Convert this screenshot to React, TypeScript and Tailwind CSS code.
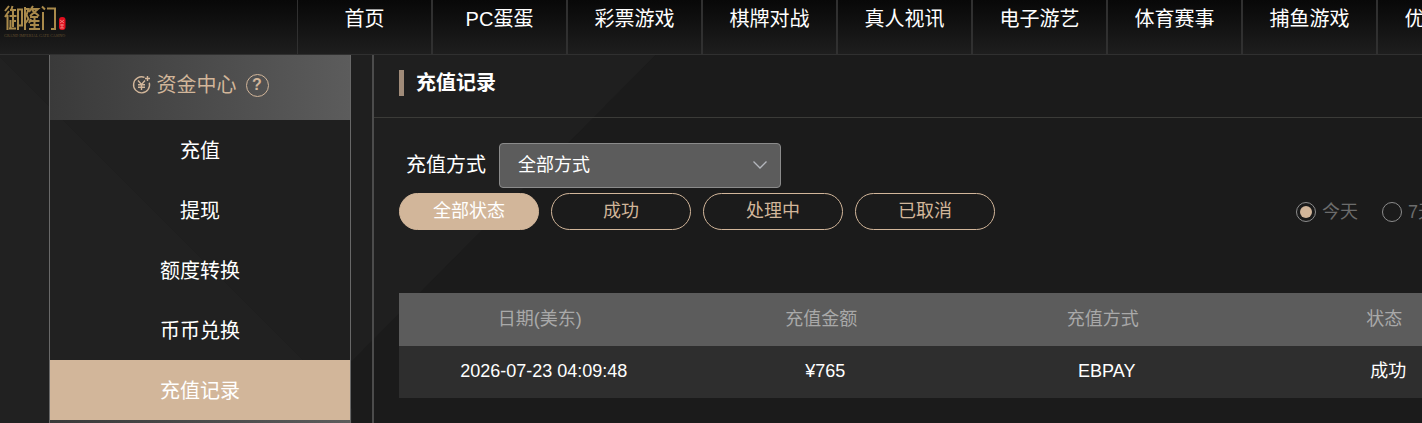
import React from "react";

const navItems = ["首页", "PC蛋蛋", "彩票游戏", "棋牌对战", "真人视讯", "电子游艺", "体育赛事", "捕鱼游戏", "优惠活动"];
const menuItems = ["充值", "提现", "额度转换", "币币兑换", "充值记录"];
const statuses = ["全部状态", "成功", "处理中", "已取消"];
const ranges = ["今天", "7天"];
const columns = ["日期(美东)", "充值金额", "充值方式", "状态"];
const records = [["2026-07-23 04:09:48", "¥765", "EBPAY", "成功"]];

function Logo() {
  return (
    <a href="#" aria-label="御隆门" className="block w-[298px] shrink-0 pt-1 pl-1">
      <svg width="64" height="36" viewBox="0 0 64 36">
        <g fill="none" stroke="#a98a4b" strokeWidth="2">
          <path d="M5 2 1 7M5 7 1 13M3.5 11v15M8.500 2 7 7M6 6h6M9 5v18M5.500 12h7M9 17h3M6.500 16v8M5 24.500h7M13.500 5.500H18v16h-3M14 4.500V26" />
          <path d="M21 3v23M20 5h4.500l-2 6 2 4-3 4M29 2l-4 6M27 5h7l-8 7M28 6l7 6M26 13h8M27 15l-2 4M25.500 17h10M30.500 13v12M26 21h9M25 25h11" />
          <path d="M39 8v18M38 2.500l3 3M43 4.500h8V25h-4" />
        </g>
        <rect x="55" y="13" width="6.500" height="13" rx="3" fill="#e00f1e" />
        <path d="M56 16l4 3M60 16l-4 3M56 21h4M58 20v4M56 24h4" stroke="#f5a39c" strokeWidth="0.7" fill="none" />
        <text x="0" y="33" fill="#65502f" fontSize="4" fontFamily="Liberation Serif, serif">GRAND IMPERIAL GATE CASINO</text>
      </svg>
    </a>
  );
}

function CoinIcon() {
  return (
    <svg width="20" height="20" viewBox="0 0 20 20" fill="none" stroke="#d2b69a" strokeWidth="1.4">
      <path d="M12.500 2.400A8 8 0 1 0 17.300 7.800M15.500 1v5M13 3.500h5M6 5.500 9.500 9.500 13 5.500M6 9.700h7M6 12.200h7M9.500 9.500V15" />
    </svg>
  );
}

export default function App() {
  return (
    <div
      className="relative isolate flex min-h-screen flex-col overflow-hidden bg-[#1b1b1b] text-xl text-white"
      style={{ fontFamily: '"Liberation Sans", "Noto Sans CJK SC", sans-serif' }}
    >
      <svg className="absolute top-0 left-0 -z-10" width="712" height="423" aria-hidden="true">
        <path d="M0 0H710L352 361 318 375 0 57Z" fill="#1f1f1f" />
        <path d="M0 57 318 375 352 409V423H0Z" fill="#212121" />
      </svg>

      <header className="flex h-[55px] shrink-0 border-b border-[#303030] bg-linear-to-b from-[#080808] to-[#1e1e1e]">
        <Logo />
        <nav className="-ml-px flex">
          {navItems.map((item) => (
            <a key={item} href="#" className="w-[135px] shrink-0 border-x border-[#303030] pt-[5px] text-center leading-7">
              {item}
            </a>
          ))}
        </nav>
      </header>

      <div className="flex grow pl-[49px]">
        <aside className="w-[302px] shrink-0 border-x border-[#686868]">
          <h2 className="flex h-[65px] items-center justify-center gap-[5px] bg-linear-to-r from-[#3a3a3a] to-[#5c5c5c] pb-[5px] text-[#d2b69a]">
            <CoinIcon />
            <span>资金中心</span>
            <button
              aria-label="帮助"
              className="ml-1 flex size-[23px] items-center justify-center rounded-full border border-[#d2b69a] text-base leading-none font-bold"
            >
              ?
            </button>
          </h2>
          <nav className="flex flex-col">
            {menuItems.map((item) => (
              <a
                key={item}
                href="#"
                className={
                  item === "充值记录"
                    ? "h-[60px] bg-[#d2b69a] pt-px text-center leading-[60px]"
                    : "h-[60px] pt-px text-center leading-[60px]"
                }
              >
                {item}
              </a>
            ))}
          </nav>
          <div className="-mb-[62px] h-[65px] bg-linear-to-r from-[#3a3a3a] to-[#5c5c5c]" />
        </aside>

        <main className="ml-[21px] min-w-0 grow border-l-2 border-[#4c4c4c]">
          <div className="flex h-[63px] items-center border-b border-[#3b3b38] pb-1.5 pl-[25px]">
            <span className="mr-3 h-[26px] w-[5px] bg-[#a08b79]" />
            <h1 className="font-bold">充值记录</h1>
          </div>

          <div className="pt-[25px] pl-[25px]">
            <div className="flex items-center pl-[7px]">
              <label htmlFor="method" className="mr-[13px] pb-0.5">充值方式</label>
              <div className="relative">
                <select
                  id="method"
                  className="h-[45px] w-[282px] appearance-none rounded border border-[#8b8b8b] bg-[#5c5c5c] px-[18px] pb-0.5 text-lg"
                >
                  <option>全部方式</option>
                </select>
                <svg className="pointer-events-none absolute top-[17px] right-[14px]" width="14" height="10" viewBox="0 0 14 10" fill="none" stroke="#b4b7bd" strokeWidth="1.3">
                  <path d="M.5 1.5 7 8l6.5-6.5" />
                </svg>
              </div>
            </div>

            <div className="mt-[5px] flex items-center text-lg">
              <div className="flex shrink-0 gap-3">
                {statuses.map((status, i) => (
                  <button
                    key={status}
                    className={
                      i === 0
                        ? "h-[37px] w-[140px] rounded-full border border-[#d2b69a] bg-[#d2b69a] pb-0.5"
                        : "h-[37px] w-[140px] rounded-full border border-[#d2b69a] pb-0.5 text-[#d2b69a]"
                    }
                  >
                    {status}
                  </button>
                ))}
              </div>
              <div className="-mr-3.5 ml-auto flex shrink-0 gap-6 text-[#6c6c6c]">
                {ranges.map((range, i) => (
                  <label key={range} className="flex items-center gap-1.5">
                    <input
                      type="radio"
                      name="range"
                      defaultChecked={i === 0}
                      className="size-5 appearance-none rounded-full border border-[#8c8c8c] bg-clip-content p-[3px] checked:bg-[#d2b69a]"
                    />
                    {range}
                  </label>
                ))}
              </div>
            </div>

            <table className="mt-[63px] w-[1126px] table-fixed text-center text-lg">
              <thead className="bg-[#5c5c5c] text-[#a9a9a9]">
                <tr className="h-[53px]">
                  {columns.map((column) => (
                    <th key={column} className="p-0 pb-0.5 font-normal">{column}</th>
                  ))}
                </tr>
              </thead>
              <tbody className="bg-[#2e2e2e]">
                {records.map((record) => (
                  <tr key={record[0]} className="h-[52px]">
                    {record.map((cell) => (
                      <td key={cell} className="p-0 pb-0.5 pl-2">{cell}</td>
                    ))}
                  </tr>
                ))}
              </tbody>
            </table>
          </div>
        </main>
      </div>
    </div>
  );
}
